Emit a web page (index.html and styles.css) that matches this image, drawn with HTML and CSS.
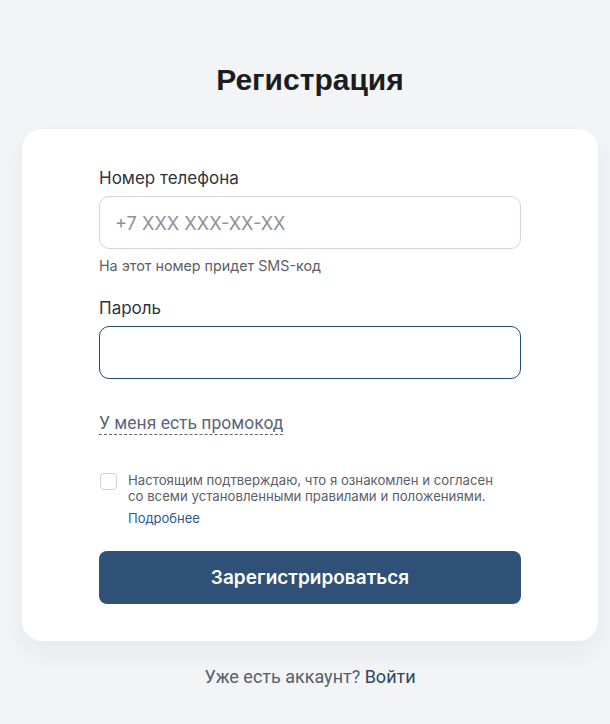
FILE: index.html
```html
<!DOCTYPE html>
<html lang="ru">
<head>
<meta charset="utf-8">
<title>Регистрация</title>
<link rel="stylesheet" href="styles.css">
</head>
<body>
<main class="page">
  <h1 class="title">Регистрация</h1>
  <section class="card">
    <form class="form">
      <div class="field">
        <label class="label" for="phone">Номер телефона</label>
        <input class="input" id="phone" type="tel" placeholder="+7 XXX XXX-XX-XX">
        <div class="hint">На этот номер придет SMS-код</div>
      </div>
      <div class="field field-password">
        <label class="label" for="pass">Пароль</label>
        <input class="input input-active" id="pass" type="password">
      </div>
      <div class="promo-row"><span class="promo">У меня есть промокод</span></div>
      <div class="agree">
        <span class="checkbox"></span>
        <div class="agree-text">
          <p class="agree-p">Настоящим подтверждаю, что я ознакомлен и согласен<br>со всеми установленными правилами и положениями.</p>
          <a class="more" href="#">Подробнее</a>
        </div>
      </div>
      <button class="submit" type="button">Зарегистрироваться</button>
    </form>
  </section>
  <p class="footer">Уже есть аккаунт? <a class="login" href="#">Войти</a></p>
</main>
</body>
</html>
```
FILE: styles.css
```css
* { box-sizing: border-box; }
html, body { margin: 0; padding: 0; }
body {
  background: #f2f4f6;
  font-family: "Inter", "Noto Sans", sans-serif;
  color: #333840;
}
.page {
  display: flex;
  flex-direction: column;
  padding: 63px 12px 0 22px;
}
.title {
  margin: 0;
  text-align: center;
  font-family: "Liberation Sans", Arial, sans-serif;
  font-weight: 700;
  font-size: 30px;
  line-height: 34px;
  color: #1b1c1f;
}
.card {
  margin-top: 32px;
  background: #fff;
  border-radius: 20px;
  box-shadow: 0 12px 28px rgba(30, 40, 60, 0.06);
  padding: 39px 77px 37px;
}
.form { display: flex; flex-direction: column; }
.field { display: flex; flex-direction: column; }
.field-password { margin-top: 24px; }
.label {
  font-size: 17px;
  line-height: 21px;
  font-weight: 400;
  color: #30343b;
  margin-bottom: 7px;
}
.input {
  height: 53px;
  width: 100%;
  border: 1px solid #d3d5dd;
  border-radius: 10px;
  padding: 0 15px;
  font-family: "Inter", sans-serif;
  font-size: 18.2px;
  color: #333;
  background: #fff;
  outline: none;
}
.input::placeholder { color: #8d919a; }
.input-active { border-color: #1f4a7e; }
.hint {
  margin-top: 8px;
  font-size: 14.3px;
  line-height: 17px;
  color: #5b6068;
}
.promo-row { margin-top: 34px; }
.promo {
  display: inline-block;
  font-family: "Roboto", sans-serif;
  font-size: 17.5px;
  line-height: 20px;
  padding-bottom: 1px;
  color: #5c6678;
  border-bottom: 1px dashed #5f6573;
}
.agree {
  margin-top: 37px;
  display: flex;
  align-items: flex-start;
  gap: 11px;
}
.checkbox {
  flex: none;
  width: 17px;
  height: 17px;
  margin: 1px 0 0 1px;
  border: 1px solid #ccced8;
  border-radius: 4px;
  background: #fff;
}
.agree-p {
  margin: 0;
  font-size: 13.2px;
  line-height: 16px;
  color: #5b6068;
}
.more {
  display: block;
  margin-top: 6px;
  font-size: 13px;
  line-height: 16px;
  color: #2c5a92;
  text-decoration: none;
}
.submit {
  margin-top: 25px;
  height: 53px;
  width: 100%;
  border: none;
  border-radius: 8px;
  background: #2f5177;
  color: #fff;
  font-family: "Inter", sans-serif;
  font-size: 19px;
  font-weight: 600;
}
.footer {
  margin: 25px 0 0;
  text-align: center;
  font-family: "Roboto", sans-serif;
  font-size: 18px;
  line-height: 21px;
  color: #555e6d;
}
.login { color: #2c4668; text-decoration: none; }
```
